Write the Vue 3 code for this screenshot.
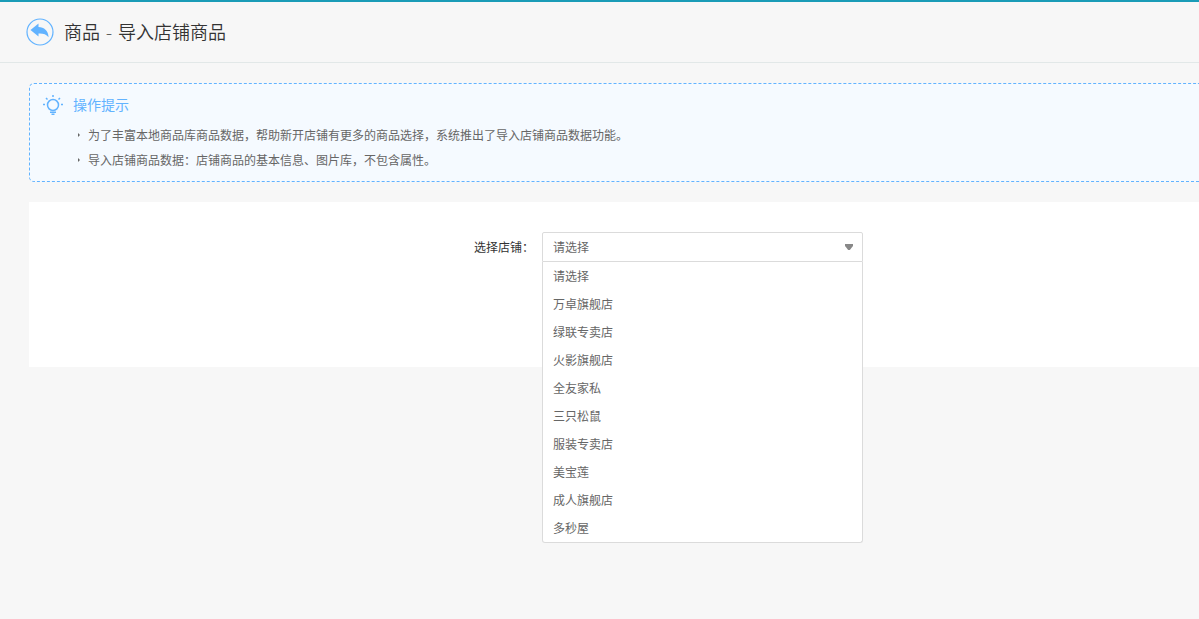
<template>
  <div class="page">
    <header class="title-bar">
      <a href="#" class="back" aria-label="返回">
        <svg width="28" height="28" viewBox="0 0 28 28">
          <circle cx="14" cy="14" r="13" fill="none" stroke="#62b3ff" stroke-width="1.2" />
          <path d="M4.5 12L12.5 5.4V9C18.2 9.2 22.2 12.6 22.6 19.2C20 16.2 17.2 15.4 12.5 15.6V18.6Z" fill="#62b3ff" />
        </svg>
      </a>
      <h1>商品 - 导入店铺商品</h1>
    </header>

    <main class="content">
      <section class="explanation">
        <div class="ex-tit">
          <svg width="22" height="22" viewBox="0 0 22 22" fill="none" stroke="#62b3ff" stroke-width="1.5">
            <circle cx="11" cy="11" r="5.5" />
            <path d="M11 1v2M1 10.5h2M19 10.5h2M4 4l1.5 1.5M18 4l-1.5 1.5M8 18.2h6M9.5 20.2h3" />
          </svg>
          <h4>操作提示</h4>
        </div>
        <ul>
          <li v-for="tip in tips" :key="tip">{{ tip }}</li>
        </ul>
      </section>

      <section class="panel">
        <form class="item" @submit.prevent>
          <label class="label" for="shop">选择店铺：</label>
          <div class="select-box">
            <select id="shop" v-model="current" @mousedown.prevent="open = !open">
              <option v-for="shop in shops" :key="shop" :value="shop">{{ shop }}</option>
            </select>
            <svg class="arrow" width="8" height="6" viewBox="0 0 8 6">
              <path d="M0 0h8v2L4.8 6H3.2L0 2z" fill="#888" />
            </svg>
            <ul v-show="open" class="options" role="listbox" aria-label="选择店铺">
              <li v-for="shop in shops" :key="shop" role="option" :aria-selected="shop === current">
                <button type="button" @click="choose(shop)">{{ shop }}</button>
              </li>
            </ul>
          </div>
        </form>
      </section>
    </main>
  </div>
</template>

<script setup>
import {ref} from 'vue'

const tips = [
  '为了丰富本地商品库商品数据，帮助新开店铺有更多的商品选择，系统推出了导入店铺商品数据功能。',
  '导入店铺商品数据：店铺商品的基本信息、图片库，不包含属性。'
]

const shops = [
  '请选择',
  '万卓旗舰店',
  '绿联专卖店',
  '火影旗舰店',
  '全友家私',
  '三只松鼠',
  '服装专卖店',
  '美宝莲',
  '成人旗舰店',
  '多秒屋'
]

const current = ref('请选择')
const open = ref(true)

const choose = (shop) => {
  current.value = shop
  open.value = false
}
</script>

<style>
body {
  background: #f7f7f7;
}
</style>

<style scoped>
.page {
  box-sizing: border-box;
  min-height: 100vh;
  border-top: 2px solid #1a9cb7;
  font-family: "Noto Sans CJK SC", sans-serif;
  font-size: 12px;
  color: #666;
}

h1,
h4,
ul {
  margin: 0;
  padding: 0;
  font-weight: 400;
  list-style: none;
}

.title-bar {
  display: flex;
  align-items: center;
  gap: 10px;
  height: 60px;
  padding-left: 26px;
  border-bottom: 1px solid #e2e8e8;
}

.back {
  display: flex;
}

h1 {
  padding-top: 2px;
  font-family: "DejaVu Sans", "Noto Sans CJK SC", sans-serif;
  font-size: 18px;
  font-weight: 350;
  line-height: 28px;
  color: #333;
}

.content {
  padding: 20px 0 20px 29px;
}

.explanation {
  padding: 10px 12px 9px;
  border: 1px dashed #62b3ff;
  border-right: 0;
  border-radius: 5px 0 0 5px;
  background: #f5faff;
}

.ex-tit {
  display: flex;
  align-items: center;
  gap: 9px;
  height: 22px;
  margin-bottom: 6px;
}

h4 {
  font-size: 14px;
  line-height: 20px;
  padding-bottom: 2px;
  color: #62b3ff;
}

.explanation li {
  display: flex;
  align-items: center;
  gap: 8px;
  padding-left: 36px;
  line-height: 25px;
}

.explanation li::before {
  content: "";
  border: 2px solid transparent;
  border-left-color: #666;
  border-right: 0;
}

.panel {
  margin-top: 20px;
  padding: 30px 0 105px;
  background: #fff;
}

.item {
  display: flex;
}

.label {
  width: 43%;
  padding-left: 2px;
  margin-right: 8px;
  line-height: 30px;
  text-align: right;
  color: #333;
}

.select-box {
  position: relative;
  width: 321px;
}

select {
  display: block;
  box-sizing: border-box;
  width: 100%;
  height: 30px;
  padding: 0 10px 2px;
  border: 1px solid #dbdbdb;
  border-radius: 2px 2px 0 0;
  background: #fff;
  font: inherit;
  color: inherit;
  appearance: none;
  outline: 0;
}

.arrow {
  position: absolute;
  top: 12px;
  right: 10px;
  pointer-events: none;
}

.options {
  position: absolute;
  top: 100%;
  right: 0;
  left: 0;
  border: 1px solid #dbdbdb;
  border-top: 0;
  border-radius: 0 0 3px 3px;
  background: #fff;
}

.options button {
  display: block;
  width: 100%;
  height: 28px;
  padding: 0 10px;
  border: 0;
  background: none;
  font: inherit;
  line-height: 28px;
  text-align: left;
  color: inherit;
  cursor: pointer;
}

.options button:hover {
  background: #f5faff;
}
</style>
